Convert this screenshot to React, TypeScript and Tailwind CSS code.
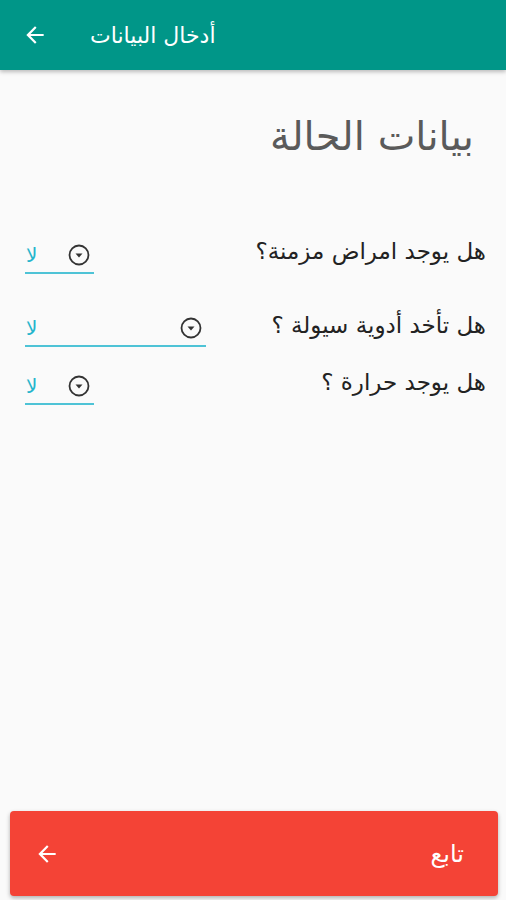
const font = { fontFamily: '"DejaVu Sans", sans-serif' };

function ArrowBack({ className }: { className?: string }) {
  return (
    <svg viewBox="0 0 24 24" className={className} fill="currentColor">
      <path d="M20 11H7.83l5.59-5.59L12 4l-8 8 8 8 1.41-1.41L7.83 13H20v-2z" />
    </svg>
  );
}

function DropIcon() {
  return (
    <svg viewBox="0 0 24 24" className="h-[24px] w-[24px] text-[#333]" fill="none" stroke="currentColor">
      <circle cx="12" cy="12" r="9.5" strokeWidth="1.8" />
      <path d="M8.5 10.5h7L12 14.5z" fill="currentColor" stroke="none" />
    </svg>
  );
}

const questions = [
  { q: "هل يوجد امراض مزمنة؟", width: "w-[69px]", mt: "mt-[0px]" },
  { q: "هل تأخد أدوية سيولة ؟", width: "w-[181px]", mt: "mt-[34px]" },
  { q: "هل يوجد حرارة ؟", width: "w-[69px]", mt: "mt-[18px]" },
];

export default function App() {
  return (
    <div className="flex h-[900px] w-[506px] flex-col bg-[#fafafa]" style={font}>
      {/* toolbar */}
      <div className="flex h-[70px] items-center bg-[#009688] px-[22px] text-white shadow-[0_2px_4px_rgba(0,0,0,0.25)]">
        <ArrowBack className="h-[26px] w-[26px]" />
        <div className="ml-[42px] text-[22px]" dir="rtl">أدخال البيانات</div>
      </div>

      <div className="flex-1 px-[20px]">
        <div className="mt-[38px] flex justify-end pr-[12px] text-[40px] leading-[56px] text-[#5a5a5a]">
          <span dir="rtl">بيانات الحالة</span>
        </div>

        <div className="mt-[70px]">
          {questions.map((item, i) => (
            <div key={i} className={`flex items-end justify-between ${item.mt}`}>
              <div className={`ml-[5px] flex h-[36px] items-center justify-between border-b-[2px] border-[#4ec3d6] ${item.width}`}>
                <span className="pl-[1px] text-[20px] text-[#26b5cc]">لا</span>
                <span className="mr-[3px]">
                  <DropIcon />
                </span>
              </div>
              <div className="mb-[5px] text-[23px] text-[#222]" dir="rtl">
                {item.q}
              </div>
            </div>
          ))}
        </div>
      </div>

      {/* continue button */}
      <div className="pb-[4px] pl-[10px] pr-[8px]">
        <button className="flex h-[85px] w-full items-center justify-between rounded-[4px] bg-[#f44336] px-[24px] text-white shadow-[0_2px_4px_rgba(0,0,0,0.3)]">
          <ArrowBack className="h-[26px] w-[26px]" />
          <span className="mr-[10px] text-[24px]" dir="rtl">تابع</span>
        </button>
      </div>
    </div>
  );
}
